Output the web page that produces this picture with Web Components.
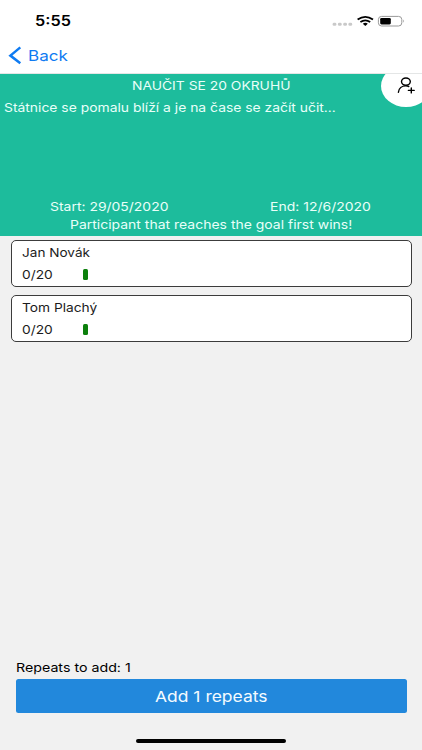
<!DOCTYPE html>
<html lang="cs">
<head>
<meta charset="utf-8">
<title>Challenge</title>
<style>
  html, body { margin: 0; height: 100%; }
  body {
    background: #f1f1f1;
    font-family: Inter, "Liberation Sans", sans-serif;
    overflow: hidden;
  }
</style>
</head>
<body>
<challenge-screen></challenge-screen>

<script>
// One line of text, widened to the length given in the "width" attribute.
class WideText extends HTMLElement {
  constructor() {
    super();
    this.attachShadow({ mode: "open" });
    this.shadowRoot.innerHTML = `
      <style>
        :host { display: block; flex: none; white-space: nowrap; text-align: left; }
        span { display: inline-block; transform-origin: 0 50%; }
      </style>
      <span><slot></slot></span>
    `;
  }

  connectedCallback() {
    const width = Number(this.getAttribute("width"));
    this.style.width = `${width}px`;
    const span = this.shadowRoot.querySelector("span");
    span.style.transform = `scaleX(${width / span.offsetWidth})`;
  }
}

class StatusBar extends HTMLElement {
  constructor() {
    super();
    this.attachShadow({ mode: "open" });
    this.shadowRoot.innerHTML = `
      <style>
        :host {
          display: flex;
          justify-content: space-between;
          align-items: center;
          box-sizing: border-box;
          height: 42px;
          padding: 0 17px 0 35px;
          background: #fff;
        }
        wide-text { font-size: 14px; font-weight: 600; line-height: 20px; }
        svg { display: block; }
      </style>
      <wide-text width="36">5:55</wide-text>
      <svg width="74" height="14" viewBox="0 0 74 14">
        <g fill="#c9c9c9">
          <rect x="1.6" y="8.8" width="3.8" height="3" rx="1.4"/>
          <rect x="6.9" y="8.8" width="3.8" height="3" rx="1.4"/>
          <rect x="12.2" y="8.8" width="3.8" height="3" rx="1.4"/>
          <rect x="17.4" y="8.8" width="3.8" height="3" rx="1.4"/>
        </g>
        <g fill="none" stroke="#000" stroke-width="1.8">
          <path d="M26.6 5.6 Q34.3 .2 42 5.6"/>
          <path d="M29.4 8.1 Q34.3 4.7 39.2 8.1"/>
        </g>
        <path d="M31.8 9.7 Q34.3 8 36.8 9.7 L34.3 12 Z"/>
        <rect x="47.4" y="2.4" width="23.4" height="9.6" rx="3.2" fill="none" stroke="#999" stroke-width="1"/>
        <rect x="49.2" y="4" width="10.6" height="6.4" rx="1.3"/>
        <path d="M72.2 5.6 Q74 7.2 72.2 8.8 Z" fill="#999"/>
      </svg>
    `;
  }
}

class NavBar extends HTMLElement {
  constructor() {
    super();
    this.attachShadow({ mode: "open" });
    this.shadowRoot.innerHTML = `
      <style>
        :host {
          display: flex;
          align-items: flex-start;
          box-sizing: border-box;
          height: 32px;
          padding: 4px 0 0 8px;
          gap: 5.5px;
          background: #fff;
          border-bottom: 1px solid #e4e6e6;
          color: #0f7bf2;
        }
        wide-text { font-size: 14.5px; line-height: 20px; }
      </style>
      <svg width="14" height="20" viewBox="0 0 14 20">
        <path d="M12.3 1.4 L2.4 9.6 L12.3 17.2" fill="none" stroke="currentColor" stroke-width="2.5"/>
      </svg>
      <wide-text width="40"><slot></slot></wide-text>
    `;
  }
}

class ChallengeHeader extends HTMLElement {
  constructor() {
    super();
    this.attachShadow({ mode: "open" });
    this.shadowRoot.innerHTML = `
      <style>
        :host {
          display: flex;
          flex-direction: column;
          position: relative;
          box-sizing: border-box;
          height: 162px;
          padding: 2px 0;
          overflow: hidden;
          background: #1dbc9c;
          color: #e9fff9;
          font-size: 12.2px;
          line-height: 20px;
        }
        .title { align-self: center; }
        .description { margin: 2px 0 0 4px; }
        .dates {
          display: flex;
          justify-content: space-between;
          margin-top: auto;
          padding: 0 51px 0 50px;
          line-height: 19px;
        }
        .rule { align-self: center; line-height: 18px; }
        .add {
          position: absolute;
          top: -9px;
          right: -9px;
          width: 50px;
          height: 42px;
          border-radius: 50%;
          background: #fff;
        }
        .add svg { display: block; margin: 12px 0 0 15px; }
      </style>
      <wide-text class="title" width="159"><slot name="title"></slot></wide-text>
      <wide-text class="description" width="331.5"><slot name="description"></slot></wide-text>
      <div class="dates">
        <wide-text width="119"><slot name="start"></slot></wide-text>
        <wide-text width="101"><slot name="end"></slot></wide-text>
      </div>
      <wide-text class="rule" width="282"><slot name="rule"></slot></wide-text>
      <div class="add">
        <svg width="20" height="18" viewBox="0 0 20 18" fill="none" stroke="#000" stroke-width="1.4" stroke-linecap="round">
          <ellipse cx="9.9" cy="4.6" rx="4.4" ry="3.6"/>
          <path d="M2.4 15.2 C2.8 11.2 6 8.9 9.8 8.9 C11.2 8.9 12.2 9.2 12.8 9.5"/>
          <path d="M12.4 13.4 H18.2 M15.3 10.9 V15.9"/>
        </svg>
      </div>
    `;
  }
}

class ParticipantCard extends HTMLElement {
  constructor() {
    super();
    this.attachShadow({ mode: "open" });
    this.shadowRoot.innerHTML = `
      <style>
        :host {
          display: block;
          box-sizing: border-box;
          height: 47px;
          padding: 1px 0 0 10.5px;
          border: 1px solid #3c3c3c;
          border-radius: 5px;
          background: #fff;
          color: #1c1c1c;
          font-size: 12.2px;
        }
        wide-text { line-height: 21px; }
        .progress { display: flex; align-items: center; height: 23px; gap: 30px; }
        .bar { width: 5.5px; height: 11px; border-radius: 1.5px; background: #0c800c; }
      </style>
      <div id="name"></div>
      <div class="progress">
        <wide-text width="30.5"><slot></slot></wide-text>
        <div class="bar"></div>
      </div>
    `;
  }

  connectedCallback() {
    const name = this.getAttribute("name");
    const width = this.getAttribute("name-width");
    this.shadowRoot.getElementById("name").innerHTML = `<wide-text width="${width}">${name}</wide-text>`;
  }
}

class RepeatsFooter extends HTMLElement {
  constructor() {
    super();
    this.attachShadow({ mode: "open" });
    this.shadowRoot.innerHTML = `
      <style>
        :host { display: flex; flex-direction: column; color: #000; }
        .label { margin-left: 15.5px; font-size: 12px; line-height: 20px; }
        button {
          display: flex;
          align-items: center;
          justify-content: center;
          box-sizing: border-box;
          height: 34px;
          margin: 1px 15.5px 0;
          padding: 2px 0 0;
          border: 0;
          border-radius: 2.5px;
          background: #2288dc;
          color: #f4fbff;
          font: 15px/20px Inter, "Liberation Sans", sans-serif;
        }
        .home { align-self: center; width: 150px; height: 4px; margin: 26px 0 7px; border-radius: 2px; background: #000; }
      </style>
      <wide-text class="label" width="115"><slot name="label"></slot></wide-text>
      <button><wide-text width="113"><slot name="action"></slot></wide-text></button>
      <div class="home"></div>
    `;
  }
}

class ChallengeScreen extends HTMLElement {
  constructor() {
    super();
    this.attachShadow({ mode: "open" });
    this.shadowRoot.innerHTML = `
      <style>
        :host { display: flex; flex-direction: column; height: 100vh; background: #f1f1f1; }
        .list { display: flex; flex-direction: column; flex: 1; gap: 8px; padding: 4px 10.5px 0; }
      </style>
      <status-bar></status-bar>
      <nav-bar>Back</nav-bar>
      <challenge-header>
        <span slot="title">NAUČIT SE 20 OKRUHŮ</span>
        <span slot="description">Státnice se pomalu blíží a je na čase se začít učit...</span>
        <span slot="start">Start: 29/05/2020</span>
        <span slot="end">End: 12/6/2020</span>
        <span slot="rule">Participant that reaches the goal first wins!</span>
      </challenge-header>
      <div class="list">
        <participant-card name="Jan Novák" name-width="68">0/20</participant-card>
        <participant-card name="Tom Plachý" name-width="75.5">0/20</participant-card>
      </div>
      <repeats-footer>
        <span slot="label">Repeats to add: 1</span>
        <span slot="action">Add 1 repeats</span>
      </repeats-footer>
    `;
  }
}

customElements.define("wide-text", WideText);
customElements.define("status-bar", StatusBar);
customElements.define("nav-bar", NavBar);
customElements.define("challenge-header", ChallengeHeader);
customElements.define("participant-card", ParticipantCard);
customElements.define("repeats-footer", RepeatsFooter);
customElements.define("challenge-screen", ChallengeScreen);
</script>
</body>
</html>
